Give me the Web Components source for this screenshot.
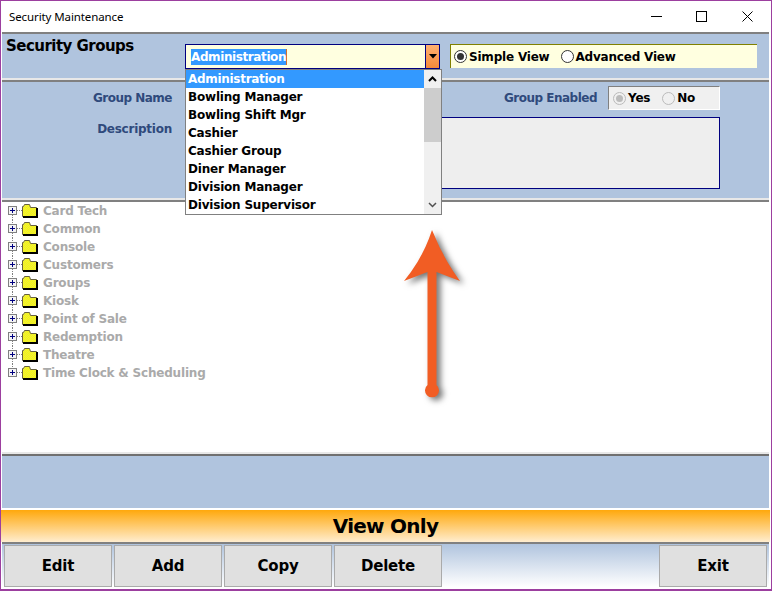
<!DOCTYPE html>
<html>
<head>
<meta charset="utf-8">
<title>Security Maintenance</title>
<style>
  html, body { margin: 0; padding: 0; background: #fff; }
  body { font-family: "DejaVu Sans", sans-serif; }
</style>
</head>
<body>
<sec-window>
  <title-bar slot="title">Security Maintenance</title-bar>
  <sec-header slot="header"></sec-header>
  <group-form slot="form"></group-form>
  <group-tree slot="tree"></group-tree>
  <blank-panel slot="blank"></blank-panel>
  <status-strip slot="status">View Only</status-strip>
  <action-bar slot="actions"></action-bar>
</sec-window>

<script>
const BOLD = `font: bold 12px "DejaVu Sans", sans-serif; letter-spacing: -0.2px;`;

class SecWindow extends HTMLElement {
  constructor() {
    super();
    this.attachShadow({ mode: 'open' }).innerHTML = `
      <style>
        :host {
          display: grid;
          position: relative;
          box-sizing: border-box;
          width: 772px;
          height: 591px;
          border: solid #9c3f9f;
          border-width: 1px 1px 2px 1px;
          background: #fff;
          grid-template-rows: 31px 48px 120px 254px 56px 32px 1fr;
          overflow: hidden;
        }
        .arrow { position: absolute; left: 389px; top: 219px; filter: drop-shadow(4px 3px 3px rgba(0,0,0,.55)); }
      </style>
      <slot name="title"></slot>
      <slot name="header"></slot>
      <slot name="form"></slot>
      <slot name="tree"></slot>
      <slot name="blank"></slot>
      <slot name="status"></slot>
      <slot name="actions"></slot>
      <svg class="arrow" width="90" height="185" viewBox="390 220 90 185">
        <path fill="#f15d24" d="M432 230 Q423 258 404 281 L427.500 272 L427.500 385 A7 7 0 1 0 436.500 385 L436.500 272 L460 281 Q443 258 432 230 Z"/>
      </svg>`;
  }
}

class TitleBar extends HTMLElement {
  constructor() {
    super();
    this.attachShadow({ mode: 'open' }).innerHTML = `
      <style>
        :host {
          display: flex;
          align-items: center;
          justify-content: space-between;
          padding: 0 18px 0 8px;
          font: 11.5px "Noto Sans", sans-serif;
          letter-spacing: -0.1px;
          color: #000;
        }
        .btns { display: flex; gap: 35px; }
        .min { margin-right: -1px; }
        svg { display: block; }
      </style>
      <span><slot></slot></span>
      <div class="btns">
        <svg class="min" width="11" height="11"><path d="M0 5.500H11" stroke="#000"/></svg>
        <svg width="11" height="11"><rect x=".5" y=".5" width="10" height="10" fill="none" stroke="#000"/></svg>
        <svg width="11" height="11"><path d="M.5 .5L10.500 10.500M10.500 .5L.5 10.500" stroke="#000"/></svg>
      </div>`;
  }
}

class RadioOpt extends HTMLElement {
  constructor() {
    super();
    this.attachShadow({ mode: 'open' }).innerHTML = `
      <style>
        :host { display: inline-flex; align-items: center; gap: 2px; ${BOLD} color: #000; }
        .dot { box-sizing: border-box; width: 13px; height: 13px; border-radius: 50%; border: 1px solid #333; background: #fff; display: flex; align-items: center; justify-content: center; }
        .dot i { width: 7px; height: 7px; border-radius: 50%; background: #333; display: none; }
        :host([checked]) .dot i { display: block; }
        :host([disabled]) .dot { border-color: #bbb; background: #f0f0f0; }
        :host([disabled]) .dot i { background: #bbb; }
      </style>
      <span class="dot"><i></i></span><span><slot></slot></span>`;
  }
}

class ComboBox extends HTMLElement {
  constructor() {
    super();
    const items = ['Administration', 'Bowling Manager', 'Bowling Shift Mgr', 'Cashier', 'Cashier Group', 'Diner Manager', 'Division Manager', 'Division Supervisor'];
    this.attachShadow({ mode: 'open' }).innerHTML = `
      <style>
        :host { display: block; position: relative; z-index: 5; flex: none; width: 255px; height: 25px; box-sizing: border-box; border: 1px solid #000080; background: #ffffe0; ${BOLD} }
        .field { display: flex; height: 100%; align-items: center; justify-content: space-between; padding-left: 5px; }
        .sel { background: #3399ff; color: #fff; height: 16px; line-height: 16px; border-right: 1px solid #d07030; letter-spacing: -0.4px; }
        .drop { width: 14px; height: 100%; box-sizing: border-box; border-left: 1px solid #000080; background: linear-gradient(#ffb070, #f58a3a); display: flex; align-items: center; justify-content: center; }
        .list { position: absolute; left: -1px; top: 24px; width: 257px; height: 146px; box-sizing: border-box; border: 1px solid #808080; background: #fff; display: flex; }
        .rows { flex: 1; }
        .row { height: 18px; line-height: 18px; padding-left: 2px; color: #000; }
        .row.on { background: #3399ff; color: #fff; letter-spacing: -0.3px; }
        .bar { width: 17px; background: #f0f0f0; display: flex; flex-direction: column; }
        .cap { height: 18px; display: flex; align-items: center; justify-content: center; }
        .thumb { height: 54px; background: #cdcdcd; }
        .gap { flex: 1; }
      </style>
      <div class="field">
        <span class="sel">${items[0]}</span>
        <span class="drop"><svg width="8" height="5"><path d="M0 0H8L4 4.500Z" fill="#000"/></svg></span>
      </div>
      <div class="list">
        <div class="rows">${items.map((t, i) => `<div class="row${i ? '' : ' on'}">${t}</div>`).join('')}</div>
        <div class="bar">
          <div class="cap"><svg width="9" height="6"><path d="M1 5L4.500 1.500L8 5" fill="none" stroke="#000" stroke-width="2"/></svg></div>
          <div class="thumb"></div>
          <div class="gap"></div>
          <div class="cap"><svg width="9" height="6"><path d="M1 1L4.500 4.500L8 1" fill="none" stroke="#505050" stroke-width="1.500"/></svg></div>
        </div>
      </div>`;
  }
}

class SecHeader extends HTMLElement {
  constructor() {
    super();
    this.attachShadow({ mode: 'open' }).innerHTML = `
      <style>
        :host {
          display: flex;
          margin: 0 2px 0 1px;
          box-sizing: border-box;
          border-top: 2px solid #808080;
          border-bottom: 2px solid #e8e8e8;
          background: #b0c4de;
          padding: 10px 0 0 4px;
        }
        h1 { width: 179px; margin: -9px 0 0; font: bold 15px "DejaVu Sans", sans-serif; letter-spacing: -0.53px; color: #000; line-height: 22px; flex: none; }
        .views { margin-left: 10px; width: 307px; height: 24px; box-sizing: border-box; border-top: 1px solid #808000; border-left: 1px solid #808000; background: #ffffe0; display: flex; align-items: center; padding-left: 3px; gap: 11px; }
      </style>
      <h1>Security Groups</h1>
      <combo-box></combo-box>
      <div class="views">
        <radio-opt checked>Simple View</radio-opt>
        <radio-opt>Advanced View</radio-opt>
      </div>`;
  }
}

class GroupForm extends HTMLElement {
  constructor() {
    super();
    this.attachShadow({ mode: 'open' }).innerHTML = `
      <style>
        :host {
          display: flex;
          flex-direction: column;
          gap: 7px;
          margin: 0 2px 0 1px;
          box-sizing: border-box;
          border-top: 2px solid #808080;
          border-bottom: 2px solid #e8e8e8;
          background: #b0c4de;
          padding: 4px 49px 0 0;
          ${BOLD}
          color: #2f4a7c;
        }
        .row { display: flex; }
        .lab, .en { letter-spacing: -0.5px; }
        .lab.d { letter-spacing: -0.25px; line-height: 24px; }
        .lab { width: 170px; flex: none; text-align: right; }
        .name { flex: none; width: 245px; margin-left: 13px; }
        .en { flex: 1; text-align: right; margin-right: 11px; line-height: 24px; }
        .lab.top { line-height: 24px; }
        .yn { width: 112px; height: 24px; box-sizing: border-box; flex: none; background: #f0f0f0; border: 1px solid; border-color: #808080 #fff #fff #808080; display: flex; align-items: center; padding-left: 4px; gap: 12px; }
        .desc { flex: 1; margin-left: 13px; height: 72px; box-sizing: border-box; border: 1px solid #000080; background: #eee; }
      </style>
      <div class="row">
        <div class="lab top">Group Name</div>
        <div class="name"></div>
        <div class="en">Group Enabled</div>
        <div class="yn"><radio-opt checked disabled>Yes</radio-opt><radio-opt disabled>No</radio-opt></div>
      </div>
      <div class="row">
        <div class="lab d">Description</div>
        <div class="desc"></div>
      </div>`;
  }
}

class TreeNode extends HTMLElement {
  constructor() {
    super();
    this.attachShadow({ mode: 'open' }).innerHTML = `
      <style>
        :host { display: flex; align-items: center; height: 18px; ${BOLD} color: #aaa; }
        svg { display: block; flex: none; }
        span { margin-left: 5px; }
        :host([first]) .up, :host([last]) .down { display: none; }
      </style>
      <svg width="36" height="18" viewBox="0 0 36 18">
        <defs>
          <pattern id="dith" width="2" height="2" patternUnits="userSpaceOnUse">
            <rect width="2" height="2" fill="#ffff00"/>
            <rect width="1" height="1" fill="#e4e450"/>
            <rect x="1" y="1" width="1" height="1" fill="#e4e450"/>
          </pattern>
        </defs>
        <path class="up" d="M10.500 0V4" stroke="#808080" stroke-dasharray="1 1"/>
        <path class="down" d="M10.500 13V18" stroke="#808080" stroke-dasharray="1 1"/>
        <path d="M15 8.500H20" stroke="#808080" stroke-dasharray="1 1"/>
        <rect x="6.500" y="4.500" width="8" height="8" fill="#f4f4f4" stroke="#808080"/>
        <path d="M8 8.500H13M10.500 6V11" stroke="#000080"/>
        <path d="M20.500 4.500V14.500H34.500V5.500H28.500L27.500 2.500H22.500L21.500 4.500Z" fill="url(#dith)" stroke="#666040"/>
        <path d="M21 15H35V6" fill="none" stroke="#000" stroke-width="2"/>
      </svg>
      <span><slot></slot></span>`;
  }
}

class GroupTree extends HTMLElement {
  constructor() {
    super();
    const nodes = ['Card Tech', 'Common', 'Console', 'Customers', 'Groups', 'Kiosk', 'Point of Sale', 'Redemption', 'Theatre', 'Time Clock &amp; Scheduling'];
    this.attachShadow({ mode: 'open' }).innerHTML = `
      <style>
        :host {
          display: block;
          margin: 0 2px 0 1px;
          box-sizing: border-box;
          border-top: 2px solid #808080;
          border-bottom: 2px solid #e8e8e8;
          background: #fff;
        }
      </style>
      ${nodes.map((n, i) => `<tree-node${i === 0 ? ' first' : ''}${i === nodes.length - 1 ? ' last' : ''}>${n}</tree-node>`).join('')}`;
  }
}

class BlankPanel extends HTMLElement {
  constructor() {
    super();
    this.attachShadow({ mode: 'open' }).innerHTML = `
      <style>
        :host {
          display: block;
          margin: 0 2px 0 1px;
          box-sizing: border-box;
          border-top: 2px solid #707070;
          border-bottom: 2px solid #fff;
          background: #b0c4de;
        }
      </style>`;
  }
}

class StatusStrip extends HTMLElement {
  constructor() {
    super();
    this.attachShadow({ mode: 'open' }).innerHTML = `
      <style>
        :host {
          display: flex;
          align-items: center;
          justify-content: center;
          margin-right: 1px;
          background: linear-gradient(#ffa80c, #ffedcf);
          font: bold 20px "DejaVu Sans", sans-serif;
          letter-spacing: -0.75px;
          color: #000;
        }
      </style>
      <slot></slot>`;
  }
}

class ActionButton extends HTMLElement {
  constructor() {
    super();
    this.attachShadow({ mode: 'open' }).innerHTML = `
      <style>
        :host {
          display: flex;
          align-items: center;
          justify-content: center;
          box-sizing: border-box;
          width: 108px;
          height: 42px;
          background: #e0e0e0;
          border: 1px solid #aaa;
          font: bold 15px "DejaVu Sans", sans-serif;
          letter-spacing: -0.2px;
          color: #000;
        }
      </style>
      <slot></slot>`;
  }
}

class ActionBar extends HTMLElement {
  constructor() {
    super();
    this.attachShadow({ mode: 'open' }).innerHTML = `
      <style>
        :host {
          display: flex;
          gap: 2px;
          margin: 0 2px 2px 1px;
          box-sizing: border-box;
          border-top: 2px solid #808080;
          padding: 1px 2px 0 2px;
          background: linear-gradient(#b0c4de, #fff);
        }
        .fill { flex: 1; }
      </style>
      <action-button>Edit</action-button>
      <action-button>Add</action-button>
      <action-button>Copy</action-button>
      <action-button>Delete</action-button>
      <div class="fill"></div>
      <action-button>Exit</action-button>`;
  }
}

customElements.define('blank-panel', BlankPanel);
customElements.define('action-button', ActionButton);
customElements.define('action-bar', ActionBar);
customElements.define('status-strip', StatusStrip);
customElements.define('tree-node', TreeNode);
customElements.define('group-tree', GroupTree);
customElements.define('radio-opt', RadioOpt);
customElements.define('combo-box', ComboBox);
customElements.define('sec-header', SecHeader);
customElements.define('group-form', GroupForm);
customElements.define('title-bar', TitleBar);
customElements.define('sec-window', SecWindow);
</script>
</body>
</html>
